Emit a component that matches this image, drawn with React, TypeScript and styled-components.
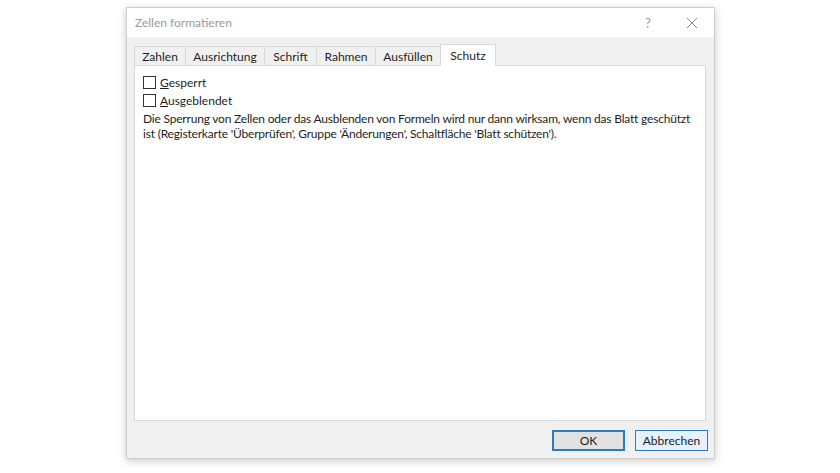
import * as React from 'react';
import styled, { createGlobalStyle } from 'styled-components';

const GlobalStyle = createGlobalStyle`
  html, body {
    margin: 0;
    padding: 0;
    background: #ffffff;
    font-family: Lato, "Noto Sans", sans-serif;
  }
`;

const Page = styled.div`
  width: 840px;
  height: 473px;
  padding: 7px 0 0 126px;
  box-sizing: border-box;
`;

const Dialog = styled.div`
  width: 589px;
  height: 452px;
  background: #f0f0f0;
  border: 1px solid #cfcfcf;
  box-sizing: border-box;
  box-shadow: 0 2px 8px rgba(0, 0, 0, 0.22);
  display: flex;
  flex-direction: column;
`;

const TitleBar = styled.div`
  height: 29px;
  background: #ffffff;
  display: flex;
  align-items: center;
  padding: 0 0 0 8px;
  flex-shrink: 0;
`;

const Title = styled.div`
  flex: 1;
  font-size: 12px;
  color: #9a9a9a;
`;

const TitleButton = styled.div`
  width: 44px;
  height: 29px;
  display: flex;
  align-items: center;
  justify-content: center;
  color: #9a9a9a;
  font-size: 13px;
`;

const Body = styled.div`
  flex: 1;
  display: flex;
  flex-direction: column;
  padding: 7px 8px 0 7px;
`;

const TabRow = styled.div`
  display: flex;
  align-items: flex-end;
  height: 21px;
  position: relative;
  z-index: 1;
`;

const Tab = styled.div<{ $active?: boolean; $w: number }>`
  width: ${({ $w }) => $w}px;
  height: ${({ $active }) => ($active ? '22px' : '20px')};
  box-sizing: border-box;
  display: flex;
  align-items: center;
  justify-content: center;
  font-size: 12px;
  color: #1e1e1e;
  background: ${({ $active }) => ($active ? '#ffffff' : '#f0f0f0')};
  border: 1px solid #d9d9d9;
  border-bottom: ${({ $active }) => ($active ? '1px solid #ffffff' : '1px solid #d9d9d9')};
  margin-left: -1px;
  margin-bottom: -1px;
  &:first-child {
    margin-left: 0;
  }
`;

const Panel = styled.div`
  height: 356px;
  background: #ffffff;
  border: 1px solid #d9d9d9;
  box-sizing: border-box;
  padding: 7px 7px 0 8px;
  display: flex;
  flex-direction: column;
`;

const CheckRow = styled.label`
  display: flex;
  align-items: center;
  gap: 4px;
  height: 18px;
  font-size: 12px;
  color: #1e1e1e;
`;

const Box = styled.span`
  width: 13px;
  height: 13px;
  box-sizing: border-box;
  border: 1px solid #333333;
  background: #ffffff;
`;

const Hint = styled.p`
  margin: 2px 0 0 0;
  font-size: 12px;
  line-height: 15px;
  letter-spacing: -0.2px;
  color: #1e1e1e;
`;

const Footer = styled.div`
  flex: 1;
  display: flex;
  justify-content: flex-end;
  align-items: center;
  gap: 10px;
  padding: 1px 0 0 0;
  margin-right: -2px;
`;

const Button = styled.div<{ $default?: boolean }>`
  width: 73px;
  height: 21px;
  box-sizing: border-box;
  display: flex;
  align-items: center;
  justify-content: center;
  font-size: 12px;
  color: #1e1e1e;
  background: ${({ $default }) => ($default ? '#e1e1e1' : '#e5f1fb')};
  border: ${({ $default }) => ($default ? '2px solid #2a7ac4' : '1px solid #2a7ac4')};
`;

const U = styled.span`
  text-decoration: underline;
`;

const tabs: [string, number][] = [
  ['Zahlen', 52],
  ['Ausrichtung', 80],
  ['Schrift', 53],
  ['Rahmen', 60],
  ['Ausfüllen', 66],
  ['Schutz', 56],
];

export default function App() {
  return (
    <Page>
      <GlobalStyle />
      <Dialog>
        <TitleBar>
          <Title>Zellen formatieren</Title>
          <TitleButton>?</TitleButton>
          <TitleButton>
            <svg width="12" height="12" viewBox="0 0 12 12">
              <path d="M1 1 L11 11 M11 1 L1 11" stroke="#8a8a8a" strokeWidth="1" fill="none" />
            </svg>
          </TitleButton>
        </TitleBar>
        <Body>
          <TabRow>
            {tabs.map(([t, w]) => (
              <Tab key={t} $w={w} $active={t === 'Schutz'}>{t}</Tab>
            ))}
          </TabRow>
          <Panel>
            <CheckRow>
              <Box />
              <span><U>G</U>esperrt</span>
            </CheckRow>
            <CheckRow>
              <Box />
              <span><U>A</U>usgeblendet</span>
            </CheckRow>
            <Hint>
              Die Sperrung von Zellen oder das Ausblenden von Formeln wird nur dann wirksam, wenn das Blatt geschützt
              ist (Registerkarte 'Überprüfen', Gruppe 'Änderungen', Schaltfläche 'Blatt schützen').
            </Hint>
          </Panel>
          <Footer>
            <Button $default>OK</Button>
            <Button>Abbrechen</Button>
          </Footer>
        </Body>
      </Dialog>
    </Page>
  );
}
